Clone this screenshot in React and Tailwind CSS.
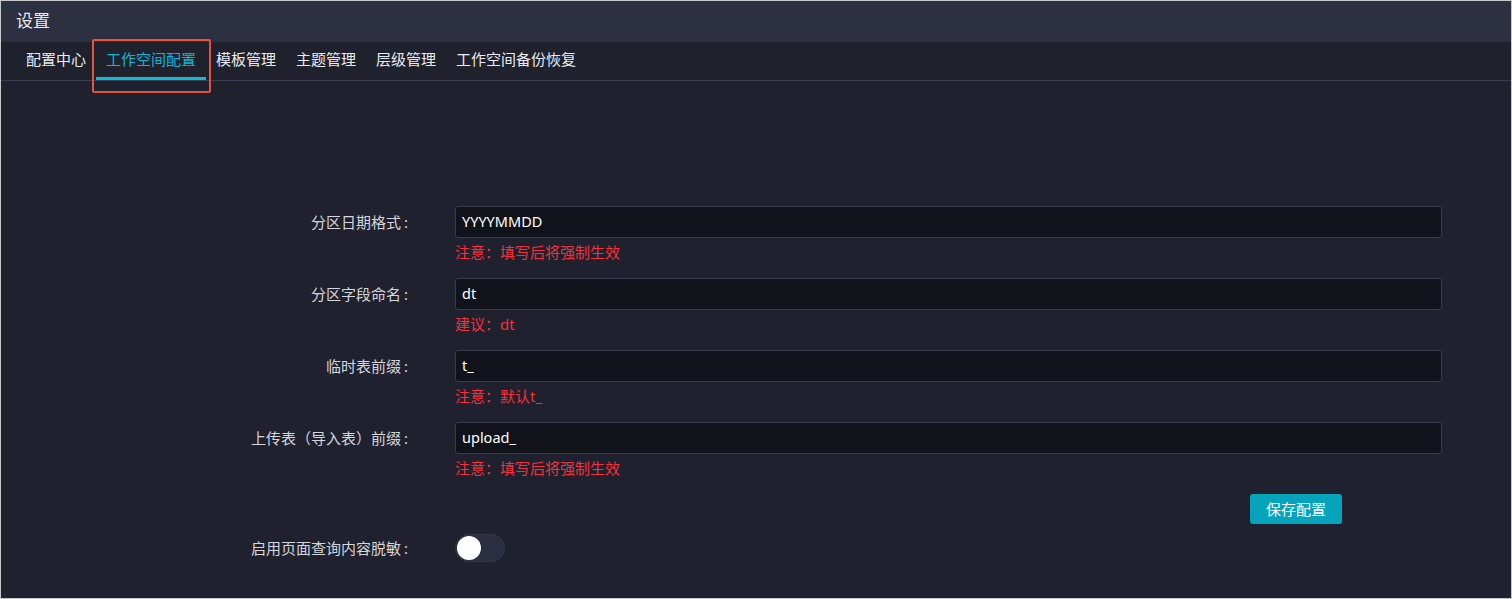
const tabs = ["配置中心", "工作空间配置", "模板管理", "主题管理", "层级管理", "工作空间备份恢复"];

const fields = [
  { label: "分区日期格式", value: "YYYYMMDD", tip: "注意：填写后将强制生效" },
  { label: "分区字段命名", value: "dt", tip: "建议：dt" },
  { label: "临时表前缀", value: "t_", tip: "注意：默认t_" },
  { label: "上传表（导入表）前缀", value: "upload_", tip: "注意：填写后将强制生效" },
];

function Label({ children }) {
  return (
    <div className="w-[413px] h-[32px] shrink-0 flex items-center justify-end text-[15px] text-[#d3d6dd] pr-[6px]">
      {children}
      <span className="ml-[3px]">:</span>
    </div>
  );
}

export default function App() {
  const font = { fontFamily: '"Noto Sans", "Noto Sans CJK SC", sans-serif' };
  return (
    <div
      className="relative w-[1512px] h-[599px] overflow-hidden border border-[#c9c9cc] bg-[#20212e] flex flex-col"
      style={font}
    >
      {/* 标题 */}
      <div className="h-[41px] shrink-0 bg-[#2d3040] flex items-center px-[15px] pb-[2px] text-[17px] text-[#e8e9ee]">
        设置
      </div>

      {/* 标签页 */}
      <div className="h-[39px] shrink-0 bg-[#1f212d] border-b border-[#3b3d52] flex items-end pl-[15px]">
        {tabs.map((t, i) => (
          <div
            key={t}
            className={
              "h-full px-[10px] flex items-center text-[15px] border-b-[3px] " +
              (i === 1 ? "text-[#0fb6d4] border-[#0bbcd6]" : "text-[#e8ebf2] border-transparent")
            }
          >
            {t}
          </div>
        ))}
      </div>

      {/* 标注框 */}
      <div className="absolute left-[91px] top-[38px] w-[119px] h-[54px] border-2 border-[#e5533a] rounded-[2px] pointer-events-none" />

      {/* 表单 */}
      <div className="flex-1 pt-[125px] pr-[69px]">
        {fields.map((f) => (
          <div key={f.label} className="flex mb-[18px]">
            <Label>{f.label}</Label>
            <div className="flex-1 ml-[41px]">
              <div className="h-[32px] bg-[#11131b] border border-[#3a3c50] rounded-[3px] flex items-center px-[6px] text-[14.5px] text-white">
                {f.value}
              </div>
              <div className="h-[22px] pt-[5px] text-[15px] leading-[18px] text-[#f5303a]">{f.tip}</div>
            </div>
          </div>
        ))}
        <div className="flex">
          <div className="ml-[1249px] h-[30px] w-[92px] rounded-[3px] bg-[#06a3bd] text-white text-[15px] flex items-center justify-center">
            保存配置
          </div>
        </div>
        <div className="flex items-center mt-[8px]">
          <Label>启用页面查询内容脱敏</Label>
          <div className="ml-[41px] w-[50px] h-[28px] rounded-full bg-[#2b2d41] border border-[#34364a] flex items-center px-[1px]">
            <div className="w-[24px] h-[24px] rounded-full bg-white" />
          </div>
        </div>
      </div>
    </div>
  );
}
